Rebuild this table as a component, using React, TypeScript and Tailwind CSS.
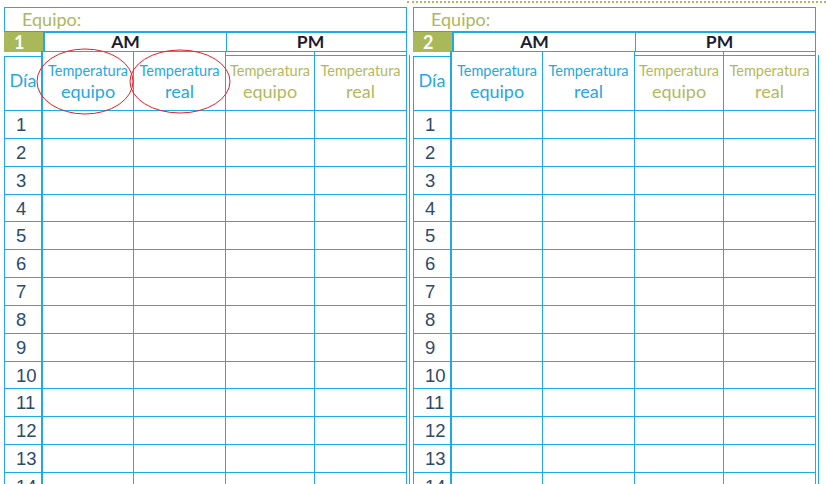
import React from "react";

const BLUE = "border-[#1faae2]";

const rows = Array.from({ length: 14 }, (_, i) => i + 1);

function HeaderText({ top, bottom, tone }: { top: string; bottom: string; tone: "am" | "pm" }) {
  const color = tone === "am" ? "text-[#27a7e0]" : "text-[#b2b85e]";
  return (
    <div className={`flex flex-col items-center ${color}`}>
      <span className="text-[14.5px] leading-[16px]">{top}</span>
      <span className="text-[18px] leading-[24px]">{bottom}</span>
    </div>
  );
}

function Panel({ num }: { num: string }) {
  return (
    <div className="w-[403px] shrink-0 flex flex-col">
      {/* equipo */}
      <div className={`h-[25px] border ${BLUE} flex items-center pl-[17px]`}>
        <span className="text-[18px] text-[#afb65c] leading-none pb-[1px]">Equipo:</span>
      </div>

      {/* AM / PM */}
      <div className="grid grid-cols-[39px_183px_181px] h-[19px]">
        <div className="bg-[#a9b858] h-[20px] flex items-center pl-[10px] text-white font-bold text-[18px] leading-none">
          {num}
        </div>
        <div className={`border-t border-b border-l-2 ${BLUE} flex items-center justify-center pr-[20px] text-[17.5px] font-bold text-[#1c1c30] leading-none`}>
          AM
        </div>
        <div className={`border-t border-b border-x ${BLUE} flex items-center justify-center pr-[12px] text-[17.5px] font-bold text-[#1c1c30] leading-none`}>
          PM
        </div>
      </div>

      {/* table */}
      <div className="grid grid-cols-[39px_91px_92px_89px_92px]">
        <div className={`h-[60px] border-r-2 border-b ${BLUE} flex flex-col`}>
          <div className={`mt-[5px] flex-1 border-t border-l ${BLUE} flex items-center justify-center pb-[6px] text-[18px] text-[#27a7e0]`}>
            Día
          </div>
        </div>
        <div className={`h-[60px] border-r border-b ${BLUE} flex items-center justify-center pt-[4px]`}>
          <HeaderText top="Temperatura" bottom="equipo" tone="am" />
        </div>
        <div className={`h-[60px] border-r border-b ${BLUE} flex items-center justify-center pt-[4px]`}>
          <HeaderText top="Temperatura" bottom="real" tone="am" />
        </div>
        <div className={`h-[60px] border-r border-b ${BLUE} flex flex-col`}>
          <div className={`mt-[4px] flex-1 border-t ${BLUE} flex items-center justify-center pb-[1px]`}>
            <HeaderText top="Temperatura" bottom="equipo" tone="pm" />
          </div>
        </div>
        <div className={`h-[60px] border-r border-b ${BLUE} flex flex-col`}>
          <div className={`mt-[4px] flex-1 border-t ${BLUE} flex items-center justify-center pb-[1px]`}>
            <HeaderText top="Temperatura" bottom="real" tone="pm" />
          </div>
        </div>

        {rows.map((r) => (
          <React.Fragment key={r}>
            <div
              className={`h-[27.85px] border-l border-r-2 border-b ${BLUE} flex items-center pl-[11px] pt-[1px] text-[18.5px] text-[#2d4a6c] font-['Liberation_Sans',Arial,sans-serif]`}
            >
              {r}
            </div>
            <div className={`h-[27.85px] border-r border-b ${BLUE}`} />
            <div className={`h-[27.85px] border-r border-b ${BLUE}`} />
            <div className={`h-[27.85px] border-r border-b ${BLUE}`} />
            <div className={`h-[27.85px] border-r border-b ${BLUE}`} />
          </React.Fragment>
        ))}
      </div>
    </div>
  );
}

export default function App() {
  return (
    <div className="relative w-[826px] h-[484px] bg-white overflow-hidden font-['Lato','Noto_Sans',sans-serif]">
      {/* page break marker */}
      <div className="absolute top-[1px] left-[407px] right-0 border-t-2 border-dotted border-[#b2b85e]" />

      <div className="flex pt-[7px] pl-[4px]">
        <Panel num="1" />
        <div className="ml-[2px] mt-[48px] w-[1px] h-[440px] bg-[#1faae2]" />
        <div className="ml-[3px]">
          <Panel num="2" />
        </div>
        <div className="ml-[2px] mt-[48px] w-[1px] h-[440px] bg-[#1faae2]" />
      </div>

      {/* red circles drawn over the first panel */}
      <svg className="absolute inset-0 pointer-events-none" width="826" height="484">
        <ellipse cx="85" cy="81.5" rx="48" ry="32.5" fill="none" stroke="#e0202a" strokeWidth="1" />
        <ellipse cx="180" cy="81.5" rx="50" ry="31.5" fill="none" stroke="#e0202a" strokeWidth="1" />
      </svg>
    </div>
  );
}
